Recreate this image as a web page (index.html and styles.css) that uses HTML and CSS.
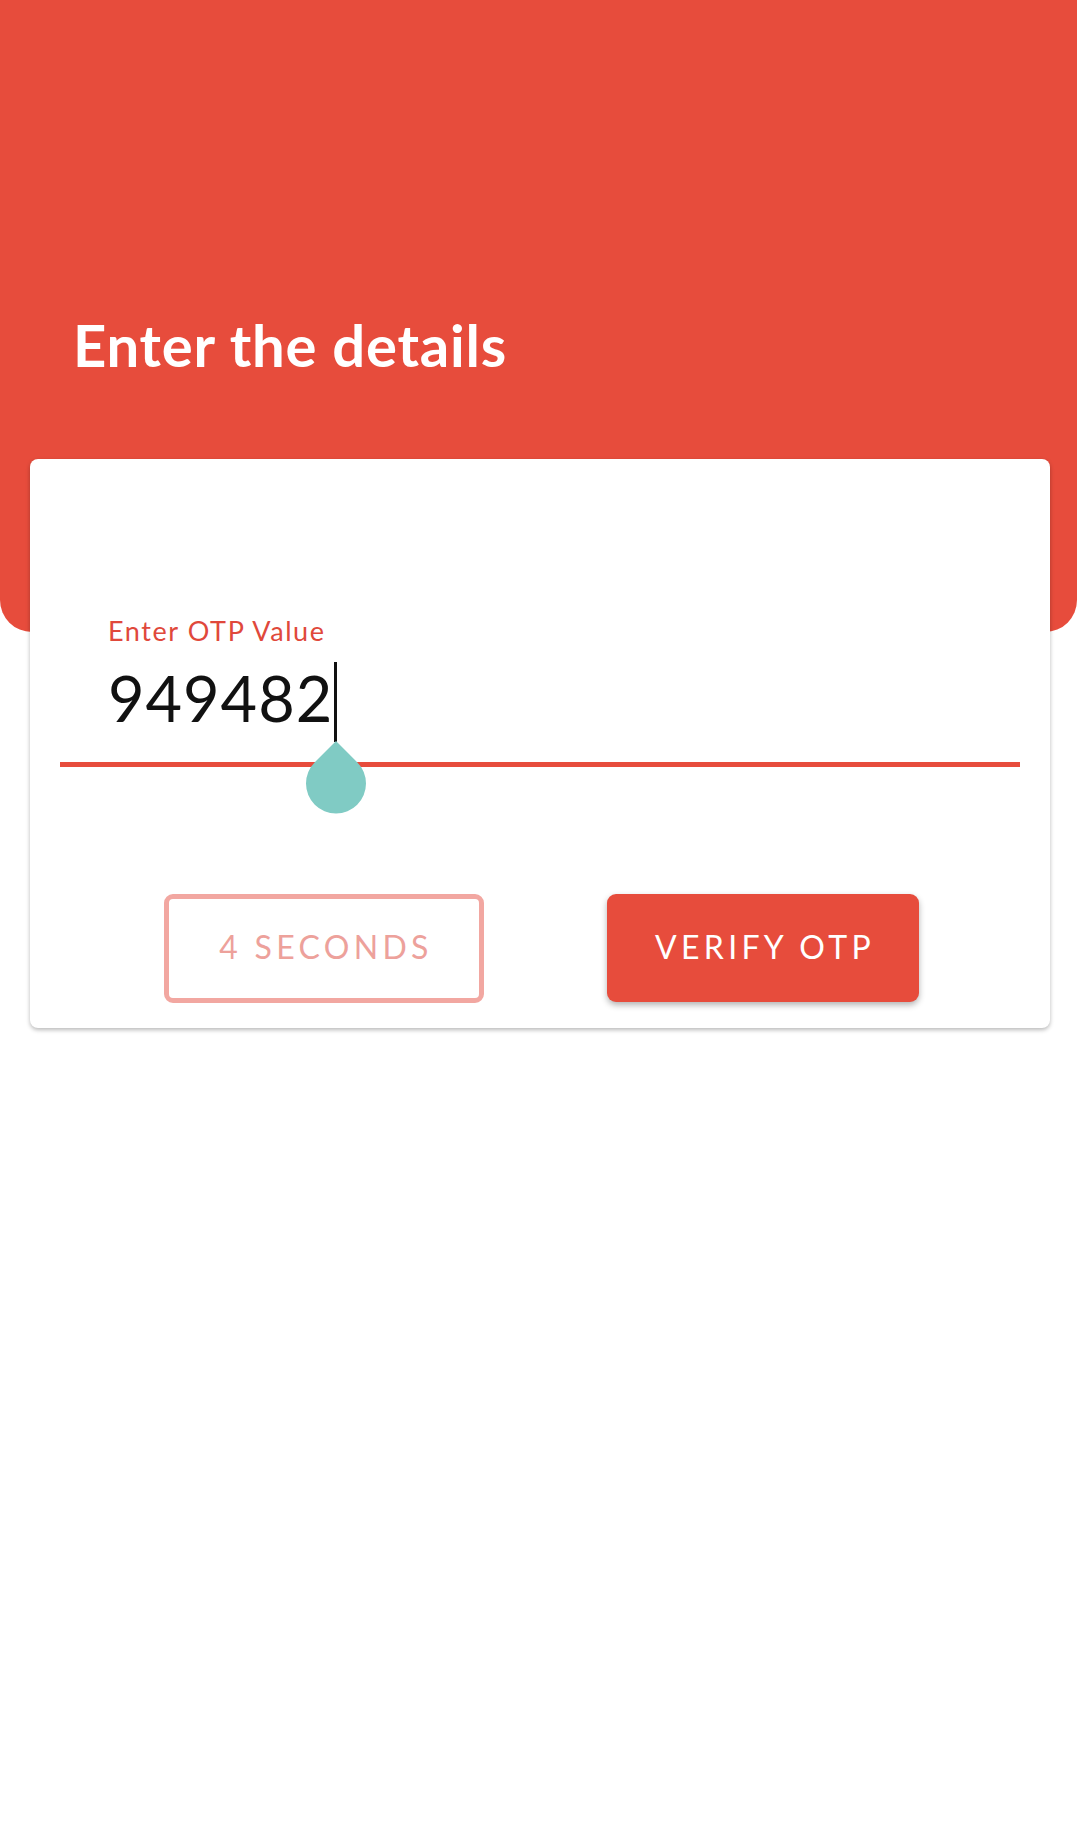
FILE: index.html
```html
<!DOCTYPE html>
<html lang="en">
<head>
<meta charset="utf-8">
<title>Enter the details</title>
<link rel="stylesheet" href="styles.css">
</head>
<body>
<header class="hero">
  <h1 class="hero-title">Enter the details</h1>
</header>
<main class="card">
  <div class="field">
    <label class="field-label">Enter OTP Value</label>
    <div class="field-value">
      <span class="value-text">949482</span>
      <span class="caret">
        <svg class="handle" viewBox="0 0 60 73" width="60" height="73" aria-hidden="true">
          <path d="M30 0 L51.21 21.21 A30 30 0 1 1 8.79 21.21 Z" fill="#80cbc4"/>
        </svg>
      </span>
    </div>
    <div class="field-line"></div>
  </div>
  <div class="actions">
    <button class="btn btn-outline" type="button">4 SECONDS</button>
    <button class="btn btn-primary" type="button">VERIFY OTP</button>
  </div>
</main>
</body>
</html>
```

FILE: styles.css
```css
html, body {
  margin: 0;
  padding: 0;
  background: #ffffff;
}

body {
  font-family: Lato, "Open Sans", "Liberation Sans", sans-serif;
  width: 1077px;
  min-height: 1837px;
}

.hero {
  height: 632px;
  background: #e74c3c;
  border-radius: 0 0 32px 32px;
  box-sizing: border-box;
  padding: 310px 0 0 73px;
}

.hero-title {
  margin: 0;
  color: #ffffff;
  font-weight: 700;
  font-size: 58px;
  line-height: 70px;
  letter-spacing: 0.8px;
}

.card {
  position: relative;
  margin: -173px 27px 0 30px;
  background: #ffffff;
  border-radius: 8px;
  box-shadow: 0 2px 4px rgba(0, 0, 0, 0.28);
  padding: 0 30px 26px;
  height: 569px;
  box-sizing: border-box;
}

.field {
  padding-top: 156px;
}

.field-label {
  display: block;
  padding-left: 48px;
  font-size: 27px;
  line-height: 32px;
  letter-spacing: 1.6px;
  color: #e0483b;
}

.field-value {
  display: flex;
  align-items: flex-start;
  height: 102px;
  margin-top: 13px;
  padding-left: 48px;
}

.value-text {
  font-size: 63px;
  line-height: 76px;
  letter-spacing: 1px;
  color: #111111;
}

.caret {
  position: relative;
  margin-top: 2px;
  margin-left: 1px;
  width: 3px;
  height: 80px;
  background: #111111;
}

.handle {
  position: absolute;
  top: 79px;
  left: 50%;
  transform: translateX(-50%);
  z-index: 2;
  display: block;
}

.field-line {
  height: 5px;
  background: #e74c3c;
}

.actions {
  display: flex;
  justify-content: center;
  gap: 123px;
  margin-top: 127px;
  padding-left: 3px;
}

.btn {
  font-family: Lato, "Open Sans", "Liberation Sans", sans-serif;
  font-size: 32px;
  letter-spacing: 4.3px;
  border-radius: 9px;
  box-sizing: border-box;
  display: flex;
  align-items: center;
  justify-content: center;
  padding: 0 0 4px 4px;
  cursor: pointer;
}

.btn-outline {
  width: 320px;
  height: 109px;
  background: #ffffff;
  border: 5px solid #f2a7a1;
  color: #eda19b;
}

.btn-primary {
  width: 312px;
  height: 108px;
  background: #e74c3c;
  border: none;
  color: #ffffff;
  box-shadow: 0 3px 6px rgba(0, 0, 0, 0.3);
}
```
